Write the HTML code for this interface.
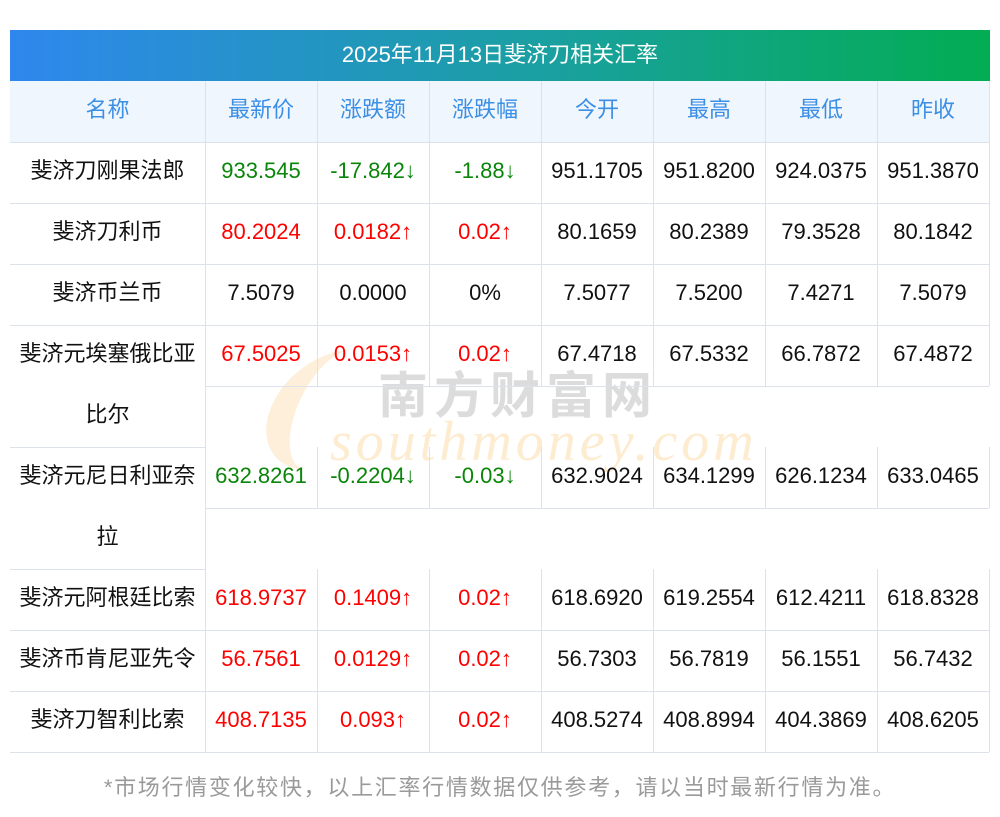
<!DOCTYPE html>
<html><head><meta charset="utf-8"><style>
body{margin:0;width:1000px;height:817px;background:#fff;position:relative;overflow:hidden;font-family:"Liberation Sans","Noto Sans CJK SC",sans-serif;}
.t{position:absolute;left:10px;top:30px;width:980px;height:51px;background:linear-gradient(90deg,#2f87ee,#1aa0a0 55%,#02ad52);color:#fff;font-size:22px;line-height:49px;text-align:center;}
.hd{position:absolute;left:10px;top:81px;width:979px;height:61px;background:#f0f6fe;}
.c{position:absolute;height:61px;line-height:58px;text-align:center;font-size:22px;color:#111;white-space:nowrap;}
.h{color:#3b8fe4;}
.r{color:#f00}.g{color:#0a850a}
.hl{position:absolute;height:1px;background:#dde1ea;}
.vl{position:absolute;width:1px;background:#dde1ea;}
.n{line-height:61px;white-space:normal;}
.foot{position:absolute;left:0;width:1000px;top:770px;text-align:center;font-size:22px;color:#9a9a9a;letter-spacing:1.7px;}
.wm1{position:absolute;left:378px;top:356px;font-size:50px;color:#dcdcdc;letter-spacing:6px;font-weight:bold;}
.wm2{position:absolute;left:330px;top:410px;font-size:56px;color:#fdecd0;font-style:italic;font-family:"Liberation Serif",serif;letter-spacing:4px;}
.wm3{position:absolute;left:270px;top:350px;width:110px;height:120px;border-left:26px solid #fdecd0;border-radius:60px 0 0 60px;transform:skewX(-20deg);opacity:.8}
</style></head><body>
<div class="wm3"></div>
<div class="wm1">南方财富网</div>
<div class="wm2">southmoney.com</div>
<div class="t">2025年11月13日斐济刀相关汇率</div>
<div class="hd"></div>

<div class="hl" style="left:10px;width:979px;top:142px"></div>
<div class="hl" style="left:10px;width:979px;top:203px"></div>
<div class="hl" style="left:10px;width:979px;top:264px"></div>
<div class="hl" style="left:10px;width:979px;top:325px"></div>
<div class="hl" style="left:205px;width:784px;top:386px"></div>
<div class="hl" style="left:10px;width:195px;top:447px"></div>
<div class="hl" style="left:205px;width:784px;top:508px"></div>
<div class="hl" style="left:10px;width:195px;top:569px"></div>
<div class="hl" style="left:10px;width:979px;top:630px"></div>
<div class="hl" style="left:10px;width:979px;top:691px"></div>
<div class="hl" style="left:10px;width:979px;top:752px"></div>
<div class="vl" style="left:205px;top:81px;height:671px"></div>
<div class="vl" style="left:317px;top:81px;height:305px"></div><div class="vl" style="left:317px;top:447px;height:61px"></div><div class="vl" style="left:317px;top:569px;height:183px"></div>
<div class="vl" style="left:429px;top:81px;height:305px"></div><div class="vl" style="left:429px;top:447px;height:61px"></div><div class="vl" style="left:429px;top:569px;height:183px"></div>
<div class="vl" style="left:541px;top:81px;height:305px"></div><div class="vl" style="left:541px;top:447px;height:61px"></div><div class="vl" style="left:541px;top:569px;height:183px"></div>
<div class="vl" style="left:653px;top:81px;height:305px"></div><div class="vl" style="left:653px;top:447px;height:61px"></div><div class="vl" style="left:653px;top:569px;height:183px"></div>
<div class="vl" style="left:765px;top:81px;height:305px"></div><div class="vl" style="left:765px;top:447px;height:61px"></div><div class="vl" style="left:765px;top:569px;height:183px"></div>
<div class="vl" style="left:877px;top:81px;height:305px"></div><div class="vl" style="left:877px;top:447px;height:61px"></div><div class="vl" style="left:877px;top:569px;height:183px"></div>
<div class="vl" style="left:989px;top:81px;height:305px"></div><div class="vl" style="left:989px;top:447px;height:61px"></div><div class="vl" style="left:989px;top:569px;height:183px"></div>

<div class="c h" style="left:10px;width:195px;top:81px">名称</div>
<div class="c h" style="left:205px;width:112px;top:81px">最新价</div>
<div class="c h" style="left:317px;width:112px;top:81px">涨跌额</div>
<div class="c h" style="left:429px;width:112px;top:81px">涨跌幅</div>
<div class="c h" style="left:541px;width:112px;top:81px">今开</div>
<div class="c h" style="left:653px;width:112px;top:81px">最高</div>
<div class="c h" style="left:765px;width:112px;top:81px">最低</div>
<div class="c h" style="left:877px;width:112px;top:81px">昨收</div>

<div class="c" style="left:10px;width:195px;top:142px">斐济刀刚果法郎</div>
<div class="c g" style="left:205px;width:112px;top:142px">933.545</div>
<div class="c g" style="left:317px;width:112px;top:142px">-17.842↓</div>
<div class="c g" style="left:429px;width:112px;top:142px">-1.88↓</div>
<div class="c" style="left:541px;width:112px;top:142px">951.1705</div>
<div class="c" style="left:653px;width:112px;top:142px">951.8200</div>
<div class="c" style="left:765px;width:112px;top:142px">924.0375</div>
<div class="c" style="left:877px;width:112px;top:142px">951.3870</div>

<div class="c" style="left:10px;width:195px;top:203px">斐济刀利币</div>
<div class="c r" style="left:205px;width:112px;top:203px">80.2024</div>
<div class="c r" style="left:317px;width:112px;top:203px">0.0182↑</div>
<div class="c r" style="left:429px;width:112px;top:203px">0.02↑</div>
<div class="c" style="left:541px;width:112px;top:203px">80.1659</div>
<div class="c" style="left:653px;width:112px;top:203px">80.2389</div>
<div class="c" style="left:765px;width:112px;top:203px">79.3528</div>
<div class="c" style="left:877px;width:112px;top:203px">80.1842</div>

<div class="c" style="left:10px;width:195px;top:264px">斐济币兰币</div>
<div class="c" style="left:205px;width:112px;top:264px">7.5079</div>
<div class="c" style="left:317px;width:112px;top:264px">0.0000</div>
<div class="c" style="left:429px;width:112px;top:264px">0%</div>
<div class="c" style="left:541px;width:112px;top:264px">7.5077</div>
<div class="c" style="left:653px;width:112px;top:264px">7.5200</div>
<div class="c" style="left:765px;width:112px;top:264px">7.4271</div>
<div class="c" style="left:877px;width:112px;top:264px">7.5079</div>

<div class="c n" style="left:10px;width:195px;top:323px;height:122px">斐济元埃塞俄比亚<br>比尔</div>
<div class="c r" style="left:205px;width:112px;top:325px">67.5025</div>
<div class="c r" style="left:317px;width:112px;top:325px">0.0153↑</div>
<div class="c r" style="left:429px;width:112px;top:325px">0.02↑</div>
<div class="c" style="left:541px;width:112px;top:325px">67.4718</div>
<div class="c" style="left:653px;width:112px;top:325px">67.5332</div>
<div class="c" style="left:765px;width:112px;top:325px">66.7872</div>
<div class="c" style="left:877px;width:112px;top:325px">67.4872</div>

<div class="c n" style="left:10px;width:195px;top:445px;height:122px">斐济元尼日利亚奈<br>拉</div>
<div class="c g" style="left:205px;width:112px;top:447px">632.8261</div>
<div class="c g" style="left:317px;width:112px;top:447px">-0.2204↓</div>
<div class="c g" style="left:429px;width:112px;top:447px">-0.03↓</div>
<div class="c" style="left:541px;width:112px;top:447px">632.9024</div>
<div class="c" style="left:653px;width:112px;top:447px">634.1299</div>
<div class="c" style="left:765px;width:112px;top:447px">626.1234</div>
<div class="c" style="left:877px;width:112px;top:447px">633.0465</div>

<div class="c" style="left:10px;width:195px;top:569px">斐济元阿根廷比索</div>
<div class="c r" style="left:205px;width:112px;top:569px">618.9737</div>
<div class="c r" style="left:317px;width:112px;top:569px">0.1409↑</div>
<div class="c r" style="left:429px;width:112px;top:569px">0.02↑</div>
<div class="c" style="left:541px;width:112px;top:569px">618.6920</div>
<div class="c" style="left:653px;width:112px;top:569px">619.2554</div>
<div class="c" style="left:765px;width:112px;top:569px">612.4211</div>
<div class="c" style="left:877px;width:112px;top:569px">618.8328</div>

<div class="c" style="left:10px;width:195px;top:630px">斐济币肯尼亚先令</div>
<div class="c r" style="left:205px;width:112px;top:630px">56.7561</div>
<div class="c r" style="left:317px;width:112px;top:630px">0.0129↑</div>
<div class="c r" style="left:429px;width:112px;top:630px">0.02↑</div>
<div class="c" style="left:541px;width:112px;top:630px">56.7303</div>
<div class="c" style="left:653px;width:112px;top:630px">56.7819</div>
<div class="c" style="left:765px;width:112px;top:630px">56.1551</div>
<div class="c" style="left:877px;width:112px;top:630px">56.7432</div>

<div class="c" style="left:10px;width:195px;top:691px">斐济刀智利比索</div>
<div class="c r" style="left:205px;width:112px;top:691px">408.7135</div>
<div class="c r" style="left:317px;width:112px;top:691px">0.093↑</div>
<div class="c r" style="left:429px;width:112px;top:691px">0.02↑</div>
<div class="c" style="left:541px;width:112px;top:691px">408.5274</div>
<div class="c" style="left:653px;width:112px;top:691px">408.8994</div>
<div class="c" style="left:765px;width:112px;top:691px">404.3869</div>
<div class="c" style="left:877px;width:112px;top:691px">408.6205</div>

<div class="foot">*市场行情变化较快，以上汇率行情数据仅供参考，请以当时最新行情为准。</div>
</body></html>
